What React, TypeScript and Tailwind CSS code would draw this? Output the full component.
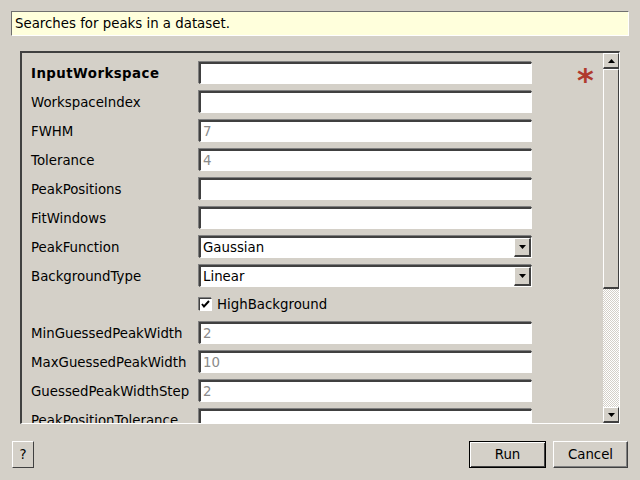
import React from "react";

const font = { fontFamily: '"DejaVu Sans", "Liberation Sans", sans-serif' };

function Field({ value }: { value?: string }) {
  return (
    <div className="h-[22px] w-[333px] bg-white border-t-2 border-l-2 border-t-[#404040] border-l-[#404040] border-b border-r border-b-[#ffffff] border-r-[#ffffff] shadow-[1px_1px_0_#d4d0c8,-1px_-1px_0_#808080] flex items-center pl-[2px] text-[13.33px] text-[#8a8a8a]">
      {value}
    </div>
  );
}

function Combo({ value }: { value: string }) {
  return (
    <div className="h-[22px] w-[333px] bg-white border-t-2 border-l-2 border-t-[#404040] border-l-[#404040] border-b border-r border-b-[#ffffff] border-r-[#ffffff] shadow-[-1px_-1px_0_#808080] flex items-center text-[13.33px] text-black">
      <span className="flex-1 pl-[2px]">{value}</span>
      <div className="w-[17px] h-[19px] bg-[#d4d0c8] border-t border-l border-t-white border-l-white border-b-2 border-r-2 border-b-[#404040] border-r-[#404040] flex items-center justify-center">
        <svg width="7" height="4" viewBox="0 0 7 4"><path d="M0 0h7L3.5 4z" fill="#000" /></svg>
      </div>
    </div>
  );
}

function Row({ label, children, bold }: { label: string; children: React.ReactNode; bold?: boolean }) {
  return (
    <div className="flex items-center h-[22px]">
      <div className={`w-[168px] pt-[2px] text-[13.33px] text-black whitespace-nowrap ${bold ? "font-bold tracking-[0.45px]" : ""}`}>{label}</div>
      {children}
    </div>
  );
}

export default function App() {
  return (
    <div className="w-[640px] h-[480px] bg-[#d4d0c8] relative overflow-hidden" style={font}>
      <div className="pt-[11px] pl-[11px] pr-[11px]">
        <div className="h-[25px] bg-[#ffffdc] border-t border-l border-t-[#6f6f6f] border-l-[#6f6f6f] border-b border-r border-b-white border-r-white flex items-center pl-[3px] text-[13.33px] text-black">
          Searches for peaks in a dataset.
        </div>
      </div>
      <div className="ml-[20px] mt-[15px] w-[600px] h-[373px] border-t-2 border-l-2 border-t-[#404040] border-l-[#404040] border-b border-r border-b-white border-r-white flex">
        <div className="flex-1 h-full overflow-hidden relative">
          <div className="pt-[9px] pl-[9px] flex flex-col gap-[7px]">
            <Row label="InputWorkspace" bold><Field /></Row>
            <Row label="WorkspaceIndex"><Field /></Row>
            <Row label="FWHM"><Field value="7" /></Row>
            <Row label="Tolerance"><Field value="4" /></Row>
            <Row label="PeakPositions"><Field /></Row>
            <Row label="FitWindows"><Field /></Row>
            <Row label="PeakFunction"><Combo value="Gaussian" /></Row>
            <Row label="BackgroundType"><Combo value="Linear" /></Row>
            <div className="flex items-center h-[21px] pl-[168px]">
              <div className="w-[13px] h-[13px] bg-white border-t border-l border-t-[#404040] border-l-[#404040] border-b border-r border-b-white border-r-white shadow-[-1px_-1px_0_#808080] flex items-center justify-center">
                <svg width="9" height="9" viewBox="0 0 9 9"><path d="M1 4l2 2.5L8 1" stroke="#000" strokeWidth="2" fill="none" /></svg>
              </div>
              <span className="ml-[5px] text-[13.33px] text-black">HighBackground</span>
            </div>
            <Row label="MinGuessedPeakWidth"><Field value="2" /></Row>
            <Row label="MaxGuessedPeakWidth"><Field value="10" /></Row>
            <Row label="GuessedPeakWidthStep"><Field value="2" /></Row>
            <Row label="PeakPositionTolerance"><Field /></Row>
          </div>
          <div className="absolute left-[555px] top-[11px] text-[#b03a2e] text-[32px] leading-none font-bold">*</div>
        </div>
        <div className="w-[16px] h-full flex flex-col">
          <div className="h-[16px] bg-[#d4d0c8] border-t border-l border-t-white border-l-white border-b-2 border-r border-b-[#404040] border-r-[#404040] flex items-center justify-center">
            <svg width="7" height="4" viewBox="0 0 7 4"><path d="M3.5 0L7 4H0z" fill="#000" /></svg>
          </div>
          <div className="h-[220px] bg-[#d4d0c8] border-t border-l border-t-white border-l-white border-b-2 border-r border-b-[#404040] border-r-[#404040]" />
          <div className="flex-1 bg-[repeating-conic-gradient(#ffffff_0_25%,#d4d0c8_0_50%)] bg-[length:2px_2px]" />
          <div className="h-[16px] bg-[#d4d0c8] border-t border-l border-t-white border-l-white border-b-2 border-r border-b-[#404040] border-r-[#404040] flex items-center justify-center">
            <svg width="7" height="4" viewBox="0 0 7 4"><path d="M0 0h7L3.5 4z" fill="#000" /></svg>
          </div>
        </div>
      </div>
      <div className="flex items-start mt-[17px] pl-[12px] pr-[12px]">
        <button className="w-[22px] h-[27px] bg-[#d4d0c8] border-t border-l border-t-white border-l-white border-b border-r border-b-[#404040] border-r-[#404040] text-[13.33px] text-black">?</button>
        <div className="flex-1" />
        <button className="w-[77px] h-[27px] bg-[#d4d0c8] border border-black shadow-[inset_1px_1px_0_#fff,inset_-1px_-1px_0_#404040] text-[13.33px] text-black">Run</button>
        <button className="ml-[7px] w-[75px] h-[27px] bg-[#d4d0c8] border-t border-l border-t-white border-l-white border-b border-r border-b-[#404040] border-r-[#404040] shadow-[inset_-1px_-1px_0_#808080] text-[13.33px] text-black">Cancel</button>
      </div>
    </div>
  );
}
